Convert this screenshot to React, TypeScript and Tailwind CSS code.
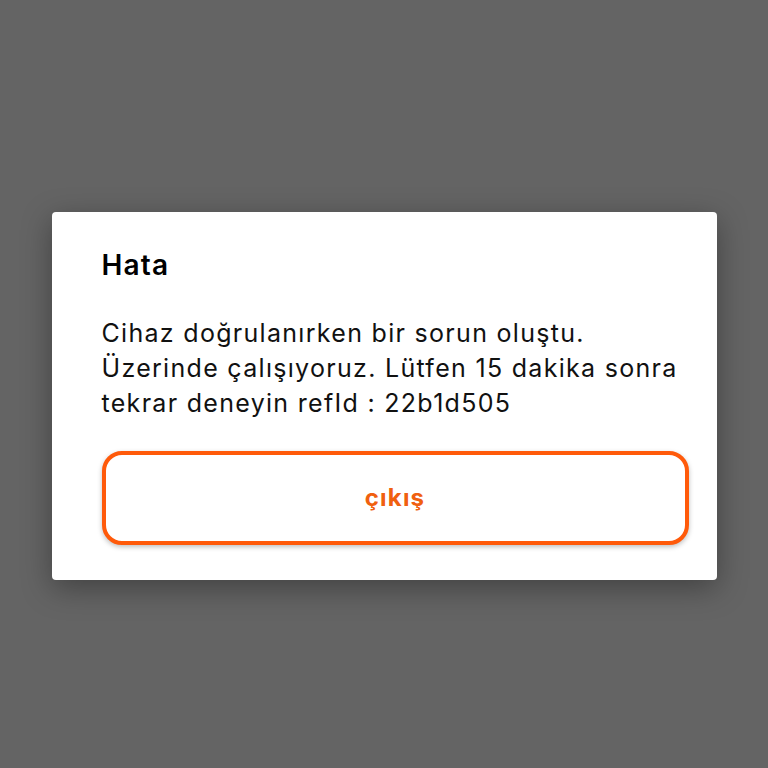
import React from 'react';

export default function App() {
  return (
    <div
      className="min-h-screen w-full bg-[#646464] flex justify-center pt-[212px]"
      style={{ fontFamily: 'Inter, "Noto Sans", sans-serif' }}
    >
      <div className="w-[665px] h-[368px] bg-white rounded-[4px] shadow-[0_8px_30px_rgba(0,0,0,0.35)] pl-[50px] pr-[28px] pt-[36px] flex flex-col">
        <h1 className="text-[28px] leading-[34px] font-semibold text-black tracking-[1.2px]">Hata</h1>
        <p className="mt-[34px] text-[25px] leading-[35px] text-[#111] tracking-[1.3px] whitespace-nowrap">
          Cihaz doğrulanırken bir sorun oluştu.
          <br />
          Üzerinde çalışıyoruz. Lütfen 15 dakika sonra
          <br />
          tekrar deneyin refId : 22b1d505
        </p>
        <button className="mt-[30px] h-[94px] w-full rounded-[20px] border-[4px] border-[#ff5a0a] bg-white shadow-[0_2px_5px_rgba(0,0,0,0.25)] flex items-center justify-center">
          <span className="text-[24px] font-bold text-[#f0600f] tracking-[1.2px]">çıkış</span>
        </button>
      </div>
    </div>
  );
}
